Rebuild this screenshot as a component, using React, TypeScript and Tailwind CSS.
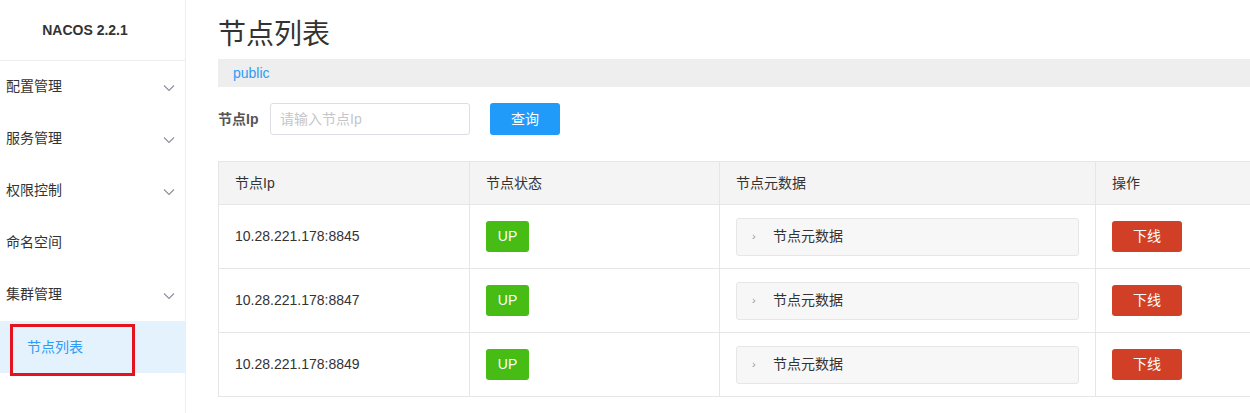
import React from "react";

const FONT = { fontFamily: '"Liberation Sans", "Noto Sans CJK SC", Arial, sans-serif' };

function Chevron() {
  return (
    <svg width="12" height="8" viewBox="0 0 12 8" className="block">
      <polyline points="1,1.5 6,6.5 11,1.5" fill="none" stroke="#8a8f99" strokeWidth="1.1" />
    </svg>
  );
}

const menus = [
  { label: "配置管理", arrow: true },
  { label: "服务管理", arrow: true },
  { label: "权限控制", arrow: true },
  { label: "命名空间", arrow: false },
  { label: "集群管理", arrow: true },
];

const rows = ["10.28.221.178:8845", "10.28.221.178:8847", "10.28.221.178:8849"];

export default function App() {
  return (
    <div className="flex w-[1250px] h-[413px] overflow-hidden bg-white text-[#333] text-[14px]" style={FONT}>
      <aside className="w-[186px] shrink-0 border-r border-[#eeeeee] h-full">
        <div className="h-[61px] border-b border-[#eeeeee] flex items-center pr-[15px] justify-center">
          <span className="font-bold text-[14px] text-[#333]">NACOS 2.2.1</span>
        </div>
        {menus.map((m) => (
          <div key={m.label} className="h-[52px] flex items-center justify-between pl-[6px] pr-[10px] pb-[2px]">
            <span className="text-[14px] text-[#333]">{m.label}</span>
            {m.arrow && (
              <span className="pt-[4px]">
                <Chevron />
              </span>
            )}
          </div>
        ))}
        <div className="relative h-[52px] bg-[#e4f2fd] flex items-center pl-[27px]">
          <span className="text-[14px] text-[#2e9bf8]">节点列表</span>
          <div className="absolute left-[10px] top-[3px] w-[125px] h-[52px] border-[3px] border-[#e3141f]" />
        </div>
      </aside>

      <main className="flex-1 pl-[32px] overflow-hidden">
        <h1 className="h-[59px] flex items-center text-[28px] leading-none text-[#333] pt-[11px]">节点列表</h1>
        <div className="h-[28px] w-[1100px] bg-[#eeeeee] flex items-center pl-[15px]">
          <span className="text-[14px] text-[#2e9bf8]">public</span>
        </div>
        <div className="flex items-center mt-[16px] h-[32px]">
          <span className="font-bold text-[14px] text-[#555] w-[52px]">节点Ip</span>
          <div className="w-[200px] h-[32px] border border-[#dcdee3] rounded-[3px] flex items-center pl-[9px]">
            <span className="text-[14px] text-[#c4c6cc]">请输入节点Ip</span>
          </div>
          <button className="ml-[20px] w-[70px] h-[32px] rounded-[3px] bg-[#209bfa] text-white text-[14px]">查询</button>
        </div>

        <div className="mt-[26px] w-[1100px] border-t border-l border-[#e6e6e6]">
          <div className="grid grid-cols-[251px_250px_376px_1fr] bg-[#f4f4f4]">
            {["节点Ip", "节点状态", "节点元数据", "操作"].map((h) => (
              <div key={h} className="h-[43px] border-r border-b border-[#e6e6e6] flex items-center pl-[16px] text-[#333]">
                {h}
              </div>
            ))}
          </div>
          {rows.map((ip) => (
            <div key={ip} className="grid grid-cols-[251px_250px_376px_1fr]">
              <div className="h-[64px] border-r border-b border-[#e6e6e6] flex items-center pl-[16px]">{ip}</div>
              <div className="h-[64px] border-r border-b border-[#e6e6e6] flex items-center pl-[16px]">
                <span className="w-[43px] h-[31px] rounded-[3px] bg-[#46bc15] text-white flex items-center justify-center">UP</span>
              </div>
              <div className="h-[64px] border-r border-b border-[#e6e6e6] flex items-center pl-[16px] pr-[16px]">
                <div className="w-[343px] h-[38px] bg-[#f7f7f7] border border-[#e6e6e6] rounded-[3px] flex items-center pl-[15px]">
                  <span className="text-[#999] text-[11px] w-[21px]">›</span>
                  <span className="text-[#333]">节点元数据</span>
                </div>
              </div>
              <div className="h-[64px] border-r border-b border-[#e6e6e6] flex items-center pl-[16px]">
                <span className="w-[70px] h-[31px] rounded-[3px] bg-[#d23f27] text-white flex items-center justify-center">下线</span>
              </div>
            </div>
          ))}
        </div>
      </main>
    </div>
  );
}
